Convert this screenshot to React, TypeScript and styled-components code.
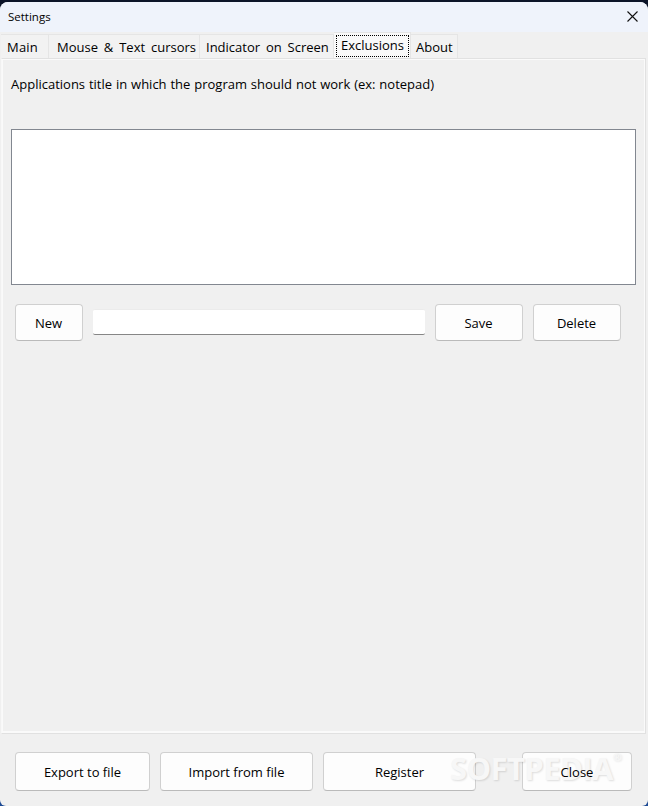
import React from "react";
import styled, { createGlobalStyle } from "styled-components";

const GlobalStyle = createGlobalStyle`
  * { box-sizing: border-box; }
  body { margin: 0; background: #0c1428; overflow: hidden; }
`;

const Desktop = styled.div`
  height: 806px;
  width: 648px;
  padding-top: 2px;
  background: linear-gradient(#0c1428 0 60%, #1d4a94 90%);
`;

const Dialog = styled.main`
  position: relative;
  display: flex;
  flex-direction: column;
  height: 804px;
  border-radius: 8px 8px 6px 6px;
  overflow: hidden;
  background: #f0f0f0;
  color: #000;
  font: 13px/18px "Open Sans", "Noto Sans", sans-serif;
`;

const TitleBar = styled.header`
  display: flex;
  flex: none;
  height: 30px;
  padding: 0 10px 0 8px;
  align-items: center;
  justify-content: space-between;
  background: #eff3fb;
  font-size: 11.5px;
`;

const Text = styled.span<{ $spacing?: number; $word?: number }>`
  display: block;
  white-space: pre;
  letter-spacing: ${(p) => p.$spacing ?? 0}px;
  word-spacing: ${(p) => p.$word ?? 0}px;
`;

const CloseIcon = styled.svg`
  display: block;
  width: 11px;
  height: 11px;
  margin-top: -2px;
`;

const Tabs = styled.nav`
  display: flex;
  flex: none;
  height: 26px;
  padding-left: 1px;
  align-items: flex-end;
`;

const Tab = styled.div<{ $width: number; $inset: number; $active?: boolean }>`
  display: flex;
  width: ${(p) => p.$width}px;
  height: ${(p) => (p.$active ? 26 : 24)}px;
  padding-left: ${(p) => (p.$active ? 2 : p.$inset)}px;
  align-items: center;
  border: solid #e5e5e5;
  border-width: 1px 1px 0 0;
  background: ${(p) => (p.$active ? "#f9f9f9" : "#f2f2f2")};
`;

const FocusFrame = styled.div`
  display: flex;
  width: 73px;
  height: 22px;
  padding: 0 0 2px 4px;
  align-items: center;
  border: 1px dotted #000;
`;

const Pane = styled.section`
  display: flex;
  flex: none;
  flex-direction: column;
  height: 676px;
  margin: 0 2px 0 1px;
  padding: 16px 8px 0 9px;
  border: 1px solid #e1e1e1;
  border-left-color: #f8f8f8;
  box-shadow: inset 0 0 0 1px #fafafa, inset 0 -2px 0 #fafafa;
`;

const ListBox = styled.div`
  flex: none;
  width: 625px;
  height: 156px;
  margin-top: 36px;
  border: 1px solid #828790;
  background: #fff;
`;

const EditRow = styled.div`
  display: flex;
  gap: 10px;
  margin-top: 19px;
  padding-left: 4px;
  align-items: center;
`;

const Button = styled.button<{ $width: number; $tall?: boolean }>`
  display: flex;
  flex: none;
  width: ${(p) => p.$width}px;
  height: ${(p) => (p.$tall ? 39 : 37)}px;
  padding: 0 ${(p) => (p.$tall ? 0 : 1)}px 0 0;
  align-items: center;
  justify-content: center;
  border: 1px solid #d0d0d0;
  border-bottom-color: #bababa;
  border-radius: 4px;
  background: #fdfdfd;
  color: #000;
  font: inherit;

  ${Text} {
    position: relative;
    z-index: 2;
  }
`;

const Field = styled.input`
  width: 332px;
  height: 26px;
  margin-top: -1px;
  padding: 0 4px;
  border: solid #ebebeb;
  border-width: 1px 0;
  border-bottom-color: #868686;
  border-radius: 2px;
  outline: none;
  background: #fff;
  font: inherit;
`;

const Footer = styled.footer`
  display: flex;
  gap: 10px;
  padding: 18px 16px 0 15px;

  & > :last-child { margin-left: auto; }
`;

const Watermark = styled.div`
  position: absolute;
  z-index: 1;
  top: 746px;
  left: 450px;
  display: flex;
  color: #f7f7f7;
  font: 700 31px/40px "Open Sans", sans-serif;
  letter-spacing: -0.6px;
  text-shadow: 1px 1px 2px rgba(0, 0, 0, 0.13);
  pointer-events: none;
`;

const Mark = styled.span`
  font-size: 11px;
  line-height: 18px;
`;

export default function App() {
  return (
    <>
      <GlobalStyle />
      <Desktop>
        <Dialog>
          <TitleBar>
            <Text>Settings</Text>
            <CloseIcon viewBox="0 0 11 11">
              <path d="M.5.5l10 10M10.5.5l-10 10" stroke="#111" strokeWidth="1.1" fill="none" />
            </CloseIcon>
          </TitleBar>
          <Tabs>
            <Tab $width={48} $inset={6}><Text $spacing={0.2}>Main</Text></Tab>
            <Tab $width={151} $inset={8}><Text $word={2.5}>Mouse &amp; Text cursors</Text></Tab>
            <Tab $width={134} $inset={6}><Text $word={2.5}>Indicator on Screen</Text></Tab>
            <Tab $width={77} $inset={2} $active>
              <FocusFrame><Text>Exclusions</Text></FocusFrame>
            </Tab>
            <Tab $width={47} $inset={5}><Text>About</Text></Tab>
          </Tabs>
          <Pane>
            <Text $word={0.5}>Applications title in which the program should not work (ex: notepad)</Text>
            <ListBox />
            <EditRow>
              <Button $width={68}><Text>New</Text></Button>
              <Field aria-label="Application title" />
              <Button $width={88}><Text>Save</Text></Button>
              <Button $width={88}><Text>Delete</Text></Button>
            </EditRow>
          </Pane>
          <Footer>
            <Button $width={135} $tall><Text>Export to file</Text></Button>
            <Button $width={153} $tall><Text>Import from file</Text></Button>
            <Button $width={153} $tall><Text>Register</Text></Button>
            <Button $width={110} $tall><Text>Close</Text></Button>
          </Footer>
          <Watermark>SOFTPEDIA<Mark>®</Mark></Watermark>
        </Dialog>
      </Desktop>
    </>
  );
}
